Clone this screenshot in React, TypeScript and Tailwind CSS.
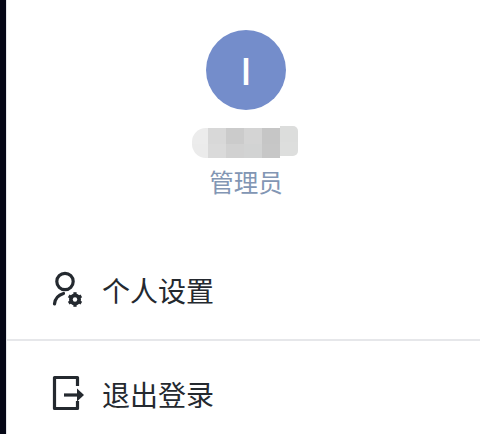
const blurCols = [
    {w: "w-[16px]", mt: "mt-[2px]", top: "bg-[#ececec]", bottom: "bg-[#ebebeb]"},
    {w: "w-[18px]", mt: "mt-[2px]", top: "bg-[#d8d8d8]", bottom: "bg-[#dadada]"},
    {w: "w-[18px]", mt: "mt-[2px]", top: "bg-[#cbcbcb]", bottom: "bg-[#d1d1d1]"},
    {w: "w-[18px]", mt: "mt-[2px]", top: "bg-[#d4d4d4]", bottom: "bg-[#d2d3d3]"},
    {w: "w-[18px]", mt: "mt-[2px]", top: "bg-[#c6c6c6]", bottom: "bg-[#c7c7c7]"},
    {w: "w-[18px]", mt: "mt-0", top: "bg-[#dcdddc]", bottom: "bg-[#dddedd]"},
];

function UserGearIcon()
{
    return (
        <svg width="40" height="40" viewBox="0 0 40 40" fill="none" className="shrink-0">
            <circle cx="17" cy="11.5" r="8.2" stroke="#24292f" strokeWidth="3.2"/>
            <path d="M6.5 34C7 29 10.500 25 15.500 23.500" stroke="#24292f" strokeWidth="3.2" strokeLinecap="round"/>
            <circle cx="27" cy="29.500" r="4.400" stroke="#24292f" strokeWidth="3.2"/>
            {[0, 60, 120].map((a) => (
                <path key={a} d="M27 22.200V36.800" stroke="#24292f" strokeWidth="3.2" transform={`rotate(${a} 27 29.500)`}/>
            ))}
            <circle cx="27" cy="29.500" r="2.200" fill="#fff"/>
        </svg>
    );
}

function LogoutIcon()
{
    return (
        <svg width="40" height="40" viewBox="0 0 40 40" fill="none" className="shrink-0">
            <path d="M29.500 12V3.500H6.500V34.500H29.500V27" stroke="#24292f" strokeWidth="3.2" strokeLinejoin="round"/>
            <path d="M16 21H30" stroke="#24292f" strokeWidth="3.2"/>
            <path d="M29 14.500 36 21 29 27.500z" fill="#24292f"/>
        </svg>
    );
}

export default function App()
{
    return (
        <div className="flex h-[434px] w-[480px] overflow-hidden bg-white font-['Noto_Sans_CJK_SC','Noto_Sans',sans-serif]">
            <div className="h-full w-[6px] shrink-0 bg-[#050716]"/>
            <div className="h-full w-px shrink-0 bg-[#e4e6ea]"/>
            <div className="flex min-w-0 flex-1 flex-col">
                <div className="flex shrink-0 flex-col items-center pt-[30px] pl-[5px]">
                    <div className="flex h-20 w-20 items-center justify-center rounded-full bg-[#748dcb] text-[37px] font-medium text-white">
                        I
                    </div>
                    <div className="mt-[16px] ml-[-2px] flex h-[32px] w-[106px] blur-[0.6px]">
                        {blurCols.map((col, i) => (
                            <div
                                key={i}
                                className={`flex h-[30px] flex-col overflow-hidden ${col.w} ${col.mt} ${i === 0 ? "rounded-l-[14px]" : ""} ${i === 5 ? "rounded-r-[5px]" : ""}`}
                            >
                                <div className={`h-[16px] ${col.top}`}/>
                                <div className={`h-[14px] ${col.bottom}`}/>
                            </div>
                        ))}
                    </div>
                    <div className="mt-[6px] text-[24.5px] leading-[36px] text-[#8296b4]">管理员</div>
                </div>
                <div className="mt-[41px] flex h-[100px] shrink-0 items-center gap-[14px] border-b-2 border-[#e6e7ea] pl-[41px] text-[28px] text-[#24292f]">
                    <UserGearIcon/>
                    <span>个人设置</span>
                </div>
                <div className="flex h-[106px] shrink-0 items-center gap-[14px] pl-[41px] text-[28px] text-[#24292f]">
                    <LogoutIcon/>
                    <span>退出登录</span>
                </div>
            </div>
        </div>
    );
}
